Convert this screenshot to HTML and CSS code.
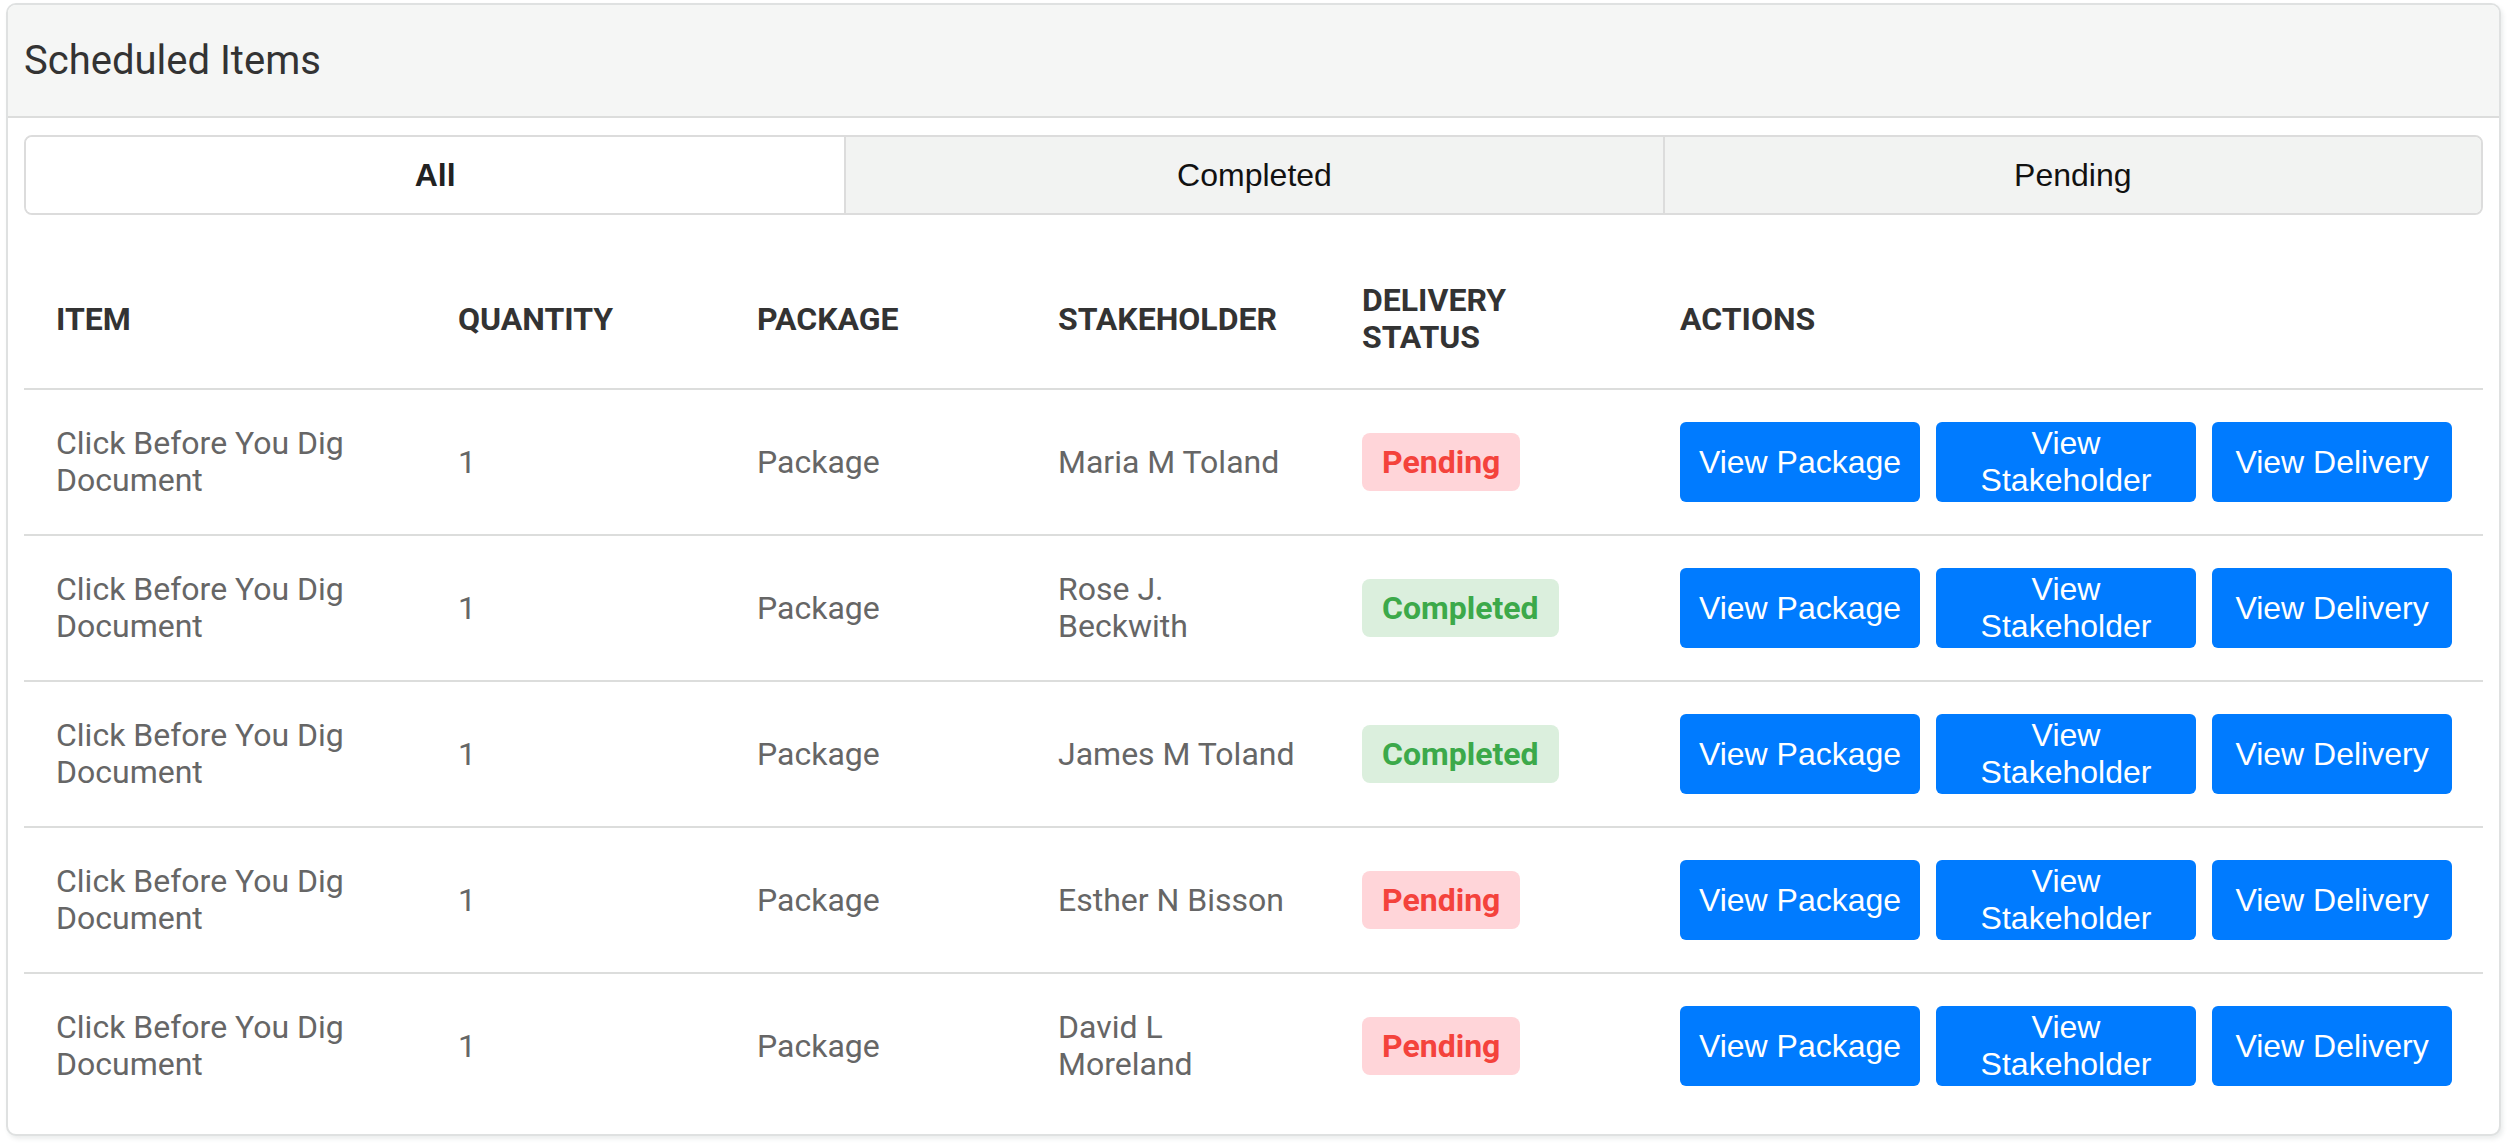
FILE: index.html
```html
<!DOCTYPE html>
<html lang="en">
<head>
<meta charset="utf-8">
<title>Scheduled Items</title>
<link rel="stylesheet" href="styles.css">
</head>
<body>
<div class="page">
  <section class="card">
    <header class="card-header">
      <h1 class="card-title">Scheduled Items</h1>
    </header>
    <div class="card-body">
      <nav class="tabs">
        <div class="tab tab-active">All</div>
        <div class="tab">Completed</div>
        <div class="tab">Pending</div>
      </nav>
      <table class="items">
        <colgroup>
          <col class="c-item">
          <col class="c-qty">
          <col class="c-pkg">
          <col class="c-stake">
          <col class="c-status">
          <col class="c-actions">
        </colgroup>
        <thead>
          <tr>
            <th>Item</th>
            <th>Quantity</th>
            <th>Package</th>
            <th>Stakeholder</th>
            <th>Delivery Status</th>
            <th>Actions</th>
          </tr>
        </thead>
        <tbody>
          <tr>
            <td>Click Before You Dig Document</td>
            <td>1</td>
            <td>Package</td>
            <td>Maria M Toland</td>
            <td><span class="badge badge-pending">Pending</span></td>
            <td><div class="actions"><button class="btn">View Package</button><button class="btn">View Stakeholder</button><button class="btn">View Delivery</button></div></td>
          </tr>
          <tr>
            <td>Click Before You Dig Document</td>
            <td>1</td>
            <td>Package</td>
            <td>Rose J. Beckwith</td>
            <td><span class="badge badge-completed">Completed</span></td>
            <td><div class="actions"><button class="btn">View Package</button><button class="btn">View Stakeholder</button><button class="btn">View Delivery</button></div></td>
          </tr>
          <tr>
            <td>Click Before You Dig Document</td>
            <td>1</td>
            <td>Package</td>
            <td>James M Toland</td>
            <td><span class="badge badge-completed">Completed</span></td>
            <td><div class="actions"><button class="btn">View Package</button><button class="btn">View Stakeholder</button><button class="btn">View Delivery</button></div></td>
          </tr>
          <tr>
            <td>Click Before You Dig Document</td>
            <td>1</td>
            <td>Package</td>
            <td>Esther N Bisson</td>
            <td><span class="badge badge-pending">Pending</span></td>
            <td><div class="actions"><button class="btn">View Package</button><button class="btn">View Stakeholder</button><button class="btn">View Delivery</button></div></td>
          </tr>
          <tr>
            <td>Click Before You Dig Document</td>
            <td>1</td>
            <td>Package</td>
            <td>David L Moreland</td>
            <td><span class="badge badge-pending">Pending</span></td>
            <td><div class="actions"><button class="btn">View Package</button><button class="btn">View Stakeholder</button><button class="btn">View Delivery</button></div></td>
          </tr>
        </tbody>
      </table>
    </div>
  </section>
</div>
</body>
</html>
```

FILE: styles.css
```css
* { box-sizing: border-box; }

html, body {
  margin: 0;
  padding: 0;
  background: #ffffff;
}

body {
  font-family: Roboto, "Liberation Sans", Arial, sans-serif;
  color: #333333;
}

.page {
  padding: 3px 7px 8px 6px;
}

.card {
  border: 2px solid #dfe1e1;
  border-radius: 10px;
  background: #ffffff;
  box-shadow: 2px 3px 4px rgba(60, 80, 80, 0.10);
  overflow: hidden;
}

.card-header {
  background: #f5f6f5;
  border-bottom: 2px solid #dcdddc;
  padding: 31px 16px 31px 16px;
}

.card-title {
  margin: 0;
  font-family: Roboto, sans-serif;
  font-weight: 400;
  font-size: 40px;
  line-height: 49px;
  color: #333333;
}

.card-body {
  padding: 17px 16px 16px 16px;
}

.tabs {
  display: grid;
  grid-template-columns: 1fr 1fr 1fr;
  border: 2px solid #dcdcdc;
  border-radius: 8px;
  overflow: hidden;
  height: 80px;
}

.tab {
  display: flex;
  align-items: center;
  justify-content: center;
  background: #f2f3f2;
  border-left: 2px solid #dcdcdc;
  font-family: "Liberation Sans", Arial, sans-serif;
  font-size: 32px;
  color: #111111;
}

.tab-active {
  background: #ffffff;
  border-left: none;
  font-weight: 700;
  color: #222222;
}

.items {
  width: 100%;
  margin-top: 35px;
  border-collapse: collapse;
  table-layout: fixed;
}

.c-item { width: 402px; }
.c-qty { width: 299px; }
.c-pkg { width: 301px; }
.c-stake { width: 304px; }
.c-status { width: 318px; }
.c-actions { width: auto; }

.items th,
.items td {
  padding: 32px 32px;
  vertical-align: middle;
  text-align: left;
  font-size: 32px;
  line-height: 37px;
}

.items th {
  font-weight: 700;
  text-transform: uppercase;
  color: #333333;
  border-bottom: 2px solid #dcdddc;
}

.items td {
  font-weight: 400;
  color: #666666;
  border-bottom: 2px solid #dcdddc;
}

.items tbody tr:last-child td {
  border-bottom: none;
}

.badge {
  display: inline-block;
  padding: 10px 20px;
  line-height: 38px;
  border-radius: 8px;
  font-weight: 700;
  font-size: 32px;
}

.badge-pending {
  background: #ffd5d9;
  color: #f4433c;
}

.badge-completed {
  background: #dbefdd;
  color: #3ca94a;
}

.actions {
  display: grid;
  grid-template-columns: 240px 260px 240px;
  column-gap: 16px;
}

.btn {
  display: flex;
  align-items: center;
  justify-content: center;
  text-align: center;
  border: none;
  border-radius: 6px;
  background: #007bff;
  color: #ffffff;
  font-family: "Liberation Sans", Arial, sans-serif;
  font-size: 32px;
  line-height: 37px;
  padding: 3px 10px;
  min-height: 80px;
}
```
